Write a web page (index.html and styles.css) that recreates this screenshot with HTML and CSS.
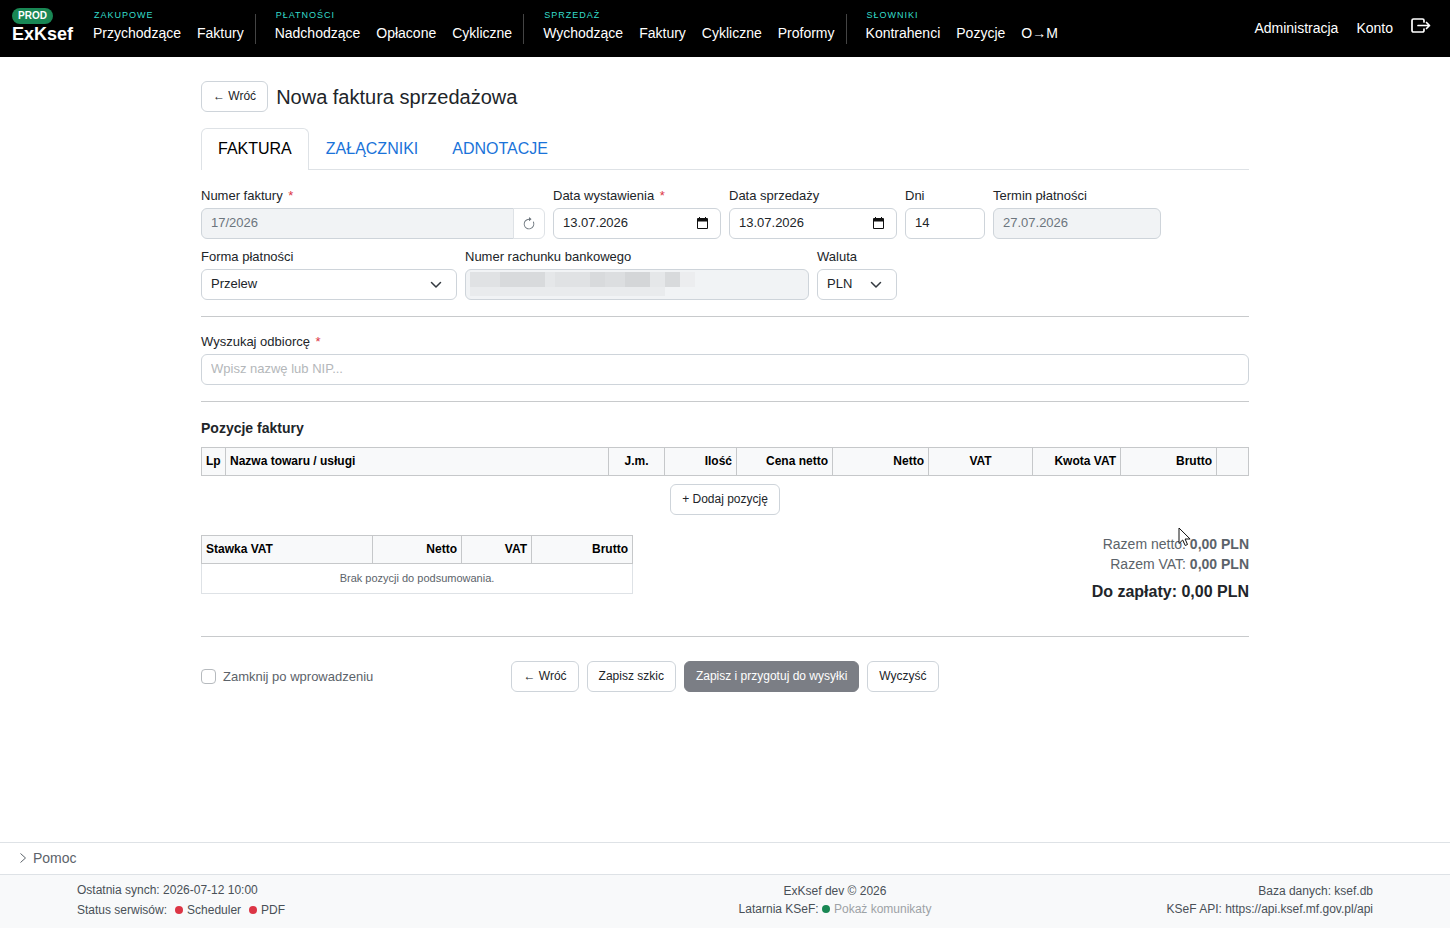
FILE: index.html
```html
<!DOCTYPE html>
<html lang="pl">
<head>
    <meta charset="UTF-8">
    <meta name="viewport" content="width=device-width, initial-scale=1.0">
    <title>Nowa faktura sprzedażowa</title>
    <link rel="stylesheet" href="styles.css">
</head>
<body>
    <header class="navbar">
        <a href="#" class="brand">
            <span class="badge">PROD</span>
            <span class="brand-name">ExKsef</span>
        </a>
        <nav class="menu">
            <div class="menu-group">
                <span class="menu-title">Zakupowe</span>
                <div class="menu-links">
                    <a href="#">Przychodzące</a>
                    <a href="#">Faktury</a>
                </div>
            </div>
            <div class="menu-group">
                <span class="menu-title">Płatności</span>
                <div class="menu-links">
                    <a href="#">Nadchodzące</a>
                    <a href="#">Opłacone</a>
                    <a href="#">Cykliczne</a>
                </div>
            </div>
            <div class="menu-group">
                <span class="menu-title">Sprzedaż</span>
                <div class="menu-links">
                    <a href="#">Wychodzące</a>
                    <a href="#">Faktury</a>
                    <a href="#">Cykliczne</a>
                    <a href="#">Proformy</a>
                </div>
            </div>
            <div class="menu-group">
                <span class="menu-title">Słowniki</span>
                <div class="menu-links">
                    <a href="#">Kontrahenci</a>
                    <a href="#">Pozycje</a>
                    <a href="#">O→M</a>
                </div>
            </div>
        </nav>
        <div class="user-menu">
            <a href="#">Administracja</a>
            <a href="#">Konto</a>
            <a href="#" class="logout" aria-label="Wyloguj">
                <svg width="20" height="16" viewBox="0 0 20 16" fill="none" stroke="currentColor" stroke-width="1.7" stroke-linecap="round" stroke-linejoin="round">
                    <path d="M13 4V2.500A1.500 1.500 0 0 0 11.500 1h-9A1.500 1.500 0 0 0 1 2.500v10A1.500 1.500 0 0 0 2.500 14h9a1.500 1.500 0 0 0 1.500-1.500V11"/>
                    <path d="M7 7.500h11.500M15.500 4.500l3 3-3 3"/>
                </svg>
            </a>
        </div>
    </header>

    <main class="container">
        <div class="page-title">
            <button type="button" class="btn">← Wróć</button>
            <h1>Nowa faktura sprzedażowa</h1>
        </div>

        <nav class="tabs">
            <a href="#" class="tab active">FAKTURA</a>
            <a href="#" class="tab">ZAŁĄCZNIKI</a>
            <a href="#" class="tab">ADNOTACJE</a>
        </nav>

        <form>
            <div class="grid">
                <div class="field span-4">
                    <label for="numer">Numer faktury <span class="required">*</span></label>
                    <div class="input-group">
                        <input type="text" id="numer" class="control" value="17/2026" disabled>
                        <button type="button" class="btn-icon" aria-label="Odśwież numer">
                            <svg width="14" height="14" viewBox="0 0 16 16" fill="currentColor">
                                <path fill-rule="evenodd" d="M8 3a5 5 0 1 0 4.546 2.914.5.5 0 0 1 .908-.417A6 6 0 1 1 8 2z"/>
                                <path d="M8 4.466V.534a.25.25 0 0 1 .41-.192l2.360 1.966c.12.1.12.284 0 .384L8.410 4.658A.25.25 0 0 1 8 4.466"/>
                            </svg>
                        </button>
                    </div>
                </div>
                <div class="field span-2">
                    <label for="data-wystawienia">Data wystawienia <span class="required">*</span></label>
                    <div class="date-box">
                        <input type="text" id="data-wystawienia" class="control" value="13.07.2026">
                        <svg class="calendar" width="11" height="12" viewBox="0 0 11 12"><path fill="#111" d="M2 0h1v1h5V0h1v1h1a1 1 0 0 1 1 1v9a1 1 0 0 1-1 1H1a1 1 0 0 1-1-1V2a1 1 0 0 1 1-1h1zM1 4.500V11h9V4.500z"/></svg>
                    </div>
                </div>
                <div class="field span-2">
                    <label for="data-sprzedazy">Data sprzedaży</label>
                    <div class="date-box">
                        <input type="text" id="data-sprzedazy" class="control" value="13.07.2026">
                        <svg class="calendar" width="11" height="12" viewBox="0 0 11 12"><path fill="#111" d="M2 0h1v1h5V0h1v1h1a1 1 0 0 1 1 1v9a1 1 0 0 1-1 1H1a1 1 0 0 1-1-1V2a1 1 0 0 1 1-1h1zM1 4.500V11h9V4.500z"/></svg>
                    </div>
                </div>
                <div class="field span-1">
                    <label for="dni">Dni</label>
                    <input type="text" id="dni" class="control" value="14">
                </div>
                <div class="field span-2">
                    <label for="termin">Termin płatności</label>
                    <input type="text" id="termin" class="control" value="27.07.2026" disabled>
                </div>

                <div class="field span-3 new-row">
                    <label for="forma">Forma płatności</label>
                    <select id="forma" class="control">
                        <option>Przelew</option>
                    </select>
                </div>
                <div class="field span-4">
                    <label for="rachunek">Numer rachunku bankowego</label>
                    <div class="masked">
                        <input type="text" id="rachunek" class="control" disabled>
                        <svg class="mask" width="225" height="24" viewBox="0 0 225 24" shape-rendering="crispEdges">
                            <path fill="#e9ebed" d="M0 15h195v9H0z"/>
                            <path fill="#e0e2e4" d="M0 0h30v15H0zM85 0h35v15H85z"/>
                            <path fill="#d8dadc" d="M30 0h45v15H30zM120 0h15v15h-15zM195 0h15v15h-15z"/>
                            <path fill="#e5e7e9" d="M75 0h10v15H75zM180 0h15v15h-15z"/>
                            <path fill="#dcdee0" d="M135 0h20v15h-20z"/>
                            <path fill="#d4d6d8" d="M155 0h25v15h-25z"/>
                            <path fill="#ecedef" d="M210 0h15v15h-15z"/>
                        </svg>
                    </div>
                </div>
                <div class="field span-1">
                    <label for="waluta">Waluta</label>
                    <select id="waluta" class="control">
                        <option>PLN</option>
                    </select>
                </div>
            </div>

            <hr>

            <div class="field">
                <label for="odbiorca">Wyszukaj odbiorcę <span class="required">*</span></label>
                <input type="text" id="odbiorca" class="control" placeholder="Wpisz nazwę lub NIP...">
            </div>

            <hr>

            <h2>Pozycje faktury</h2>
            <table class="items">
                <thead>
                    <tr>
                        <th class="col-lp">Lp</th>
                        <th>Nazwa towaru / usługi</th>
                        <th class="col-jm center">J.m.</th>
                        <th class="col-ilosc right">Ilość</th>
                        <th class="col-kwota right">Cena netto</th>
                        <th class="col-kwota right">Netto</th>
                        <th class="col-vat center">VAT</th>
                        <th class="col-kwota-vat right">Kwota VAT</th>
                        <th class="col-kwota right">Brutto</th>
                        <th class="col-akcje"></th>
                    </tr>
                </thead>
            </table>
            <div class="add-row">
                <button type="button" class="btn">+ Dodaj pozycję</button>
            </div>

            <div class="grid summary">
                <table class="span-5">
                    <thead>
                        <tr>
                            <th>Stawka VAT</th>
                            <th class="col-netto right">Netto</th>
                            <th class="col-podatek right">VAT</th>
                            <th class="col-brutto right">Brutto</th>
                        </tr>
                    </thead>
                    <tbody>
                        <tr>
                            <td colspan="4">Brak pozycji do podsumowania.</td>
                        </tr>
                    </tbody>
                </table>
                <div class="totals span-7">
                    <div>Razem netto: <strong>0,00 PLN</strong></div>
                    <div>Razem VAT: <strong>0,00 PLN</strong></div>
                    <div class="total">Do zapłaty: 0,00 PLN</div>
                    <svg class="cursor" width="14" height="20" viewBox="0 0 14 20"><path fill="#fff" stroke="#111" d="M1 1v15.500l3.700-3.500 2.500 5.500 2.300-1-2.400-5.500h5z"/></svg>
                </div>
            </div>

            <hr>

            <div class="actions">
                <label class="check"><input type="checkbox"> Zamknij po wprowadzeniu</label>
                <div class="buttons">
                    <button type="button" class="btn">← Wróć</button>
                    <button type="button" class="btn">Zapisz szkic</button>
                    <button type="button" class="btn btn-primary">Zapisz i przygotuj do wysyłki</button>
                    <button type="button" class="btn">Wyczyść</button>
                </div>
            </div>
        </form>
    </main>

    <button type="button" class="help">
        <svg width="8" height="12" viewBox="0 0 8 12" fill="none" stroke="currentColor"><path d="M1.500 1.500L6.500 6l-5 4.500"/></svg>
        Pomoc
    </button>

    <footer>
        <div class="footer-grid">
            <div class="footer-left">
                <div>Ostatnia synch: 2026-07-12 10:00</div>
                <div class="status">
                    <span>Status serwisów:</span>
                    <span><i class="dot red"></i>Scheduler</span>
                    <span><i class="dot red"></i>PDF</span>
                </div>
            </div>
            <div class="footer-center">
                <div>ExKsef dev © 2026</div>
                <div>Latarnia KSeF: <i class="dot green"></i><a href="#">Pokaż komunikaty</a></div>
            </div>
            <div class="footer-right">
                <div>Baza danych: ksef.db</div>
                <div>KSeF API: https://api.ksef.mf.gov.pl/api</div>
            </div>
        </div>
    </footer>
</body>
</html>
```
FILE: styles.css
```css
* {
    box-sizing: border-box;
}

body {
    margin: 0;
    min-height: 100vh;
    display: flex;
    flex-direction: column;
    font-family: "Liberation Sans", Arial, sans-serif;
    font-size: 14px;
    color: #212529;
    background-color: #fff;
}

a {
    text-decoration: none;
}

button, input, select {
    font-family: inherit;
}

/* Pasek nawigacji */
.navbar {
    display: flex;
    align-items: center;
    min-height: 57px;
    padding: 0 19px 0 12px;
    background-color: #000;
}

.navbar a {
    color: #fff;
}

.brand {
    display: flex;
    flex-direction: column;
    align-items: flex-start;
    margin-right: 20px;
    padding-bottom: 5px;
}

.badge {
    padding: 0 6px;
    border-radius: 8px;
    background-color: #198754;
    font-size: 10px;
    font-weight: bold;
    line-height: 16px;
}

.brand-name {
    font-size: 18px;
    font-weight: bold;
    line-height: 20px;
}

.menu {
    display: flex;
    padding-bottom: 6px;
}

.menu-group {
    position: relative;
    padding-right: 12px;
    margin-right: 19px;
}

.menu-group:not(:last-child)::after {
    content: "";
    position: absolute;
    top: 6px;
    right: 0;
    bottom: 0;
    width: 1px;
    background-color: #444;
}

.menu-title {
    display: block;
    padding-left: 1px;
    color: #35dccb;
    font-size: 9px;
    letter-spacing: 1px;
    line-height: 14px;
    text-transform: uppercase;
}

.menu-links {
    display: flex;
    gap: 16px;
    line-height: 22px;
}

.user-menu {
    display: flex;
    align-items: center;
    gap: 18px;
    margin-left: auto;
    padding-bottom: 2px;
}

.logout {
    padding-bottom: 4px;
}

.logout svg {
    display: block;
}

/* Formularz */
.container {
    flex: 1;
    width: 100%;
    max-width: 1080px;
    margin: 0 auto;
    padding: 24px 16px;
}

.page-title {
    display: flex;
    align-items: center;
    gap: 8px;
    margin-bottom: 16px;
}

h1 {
    margin: 0;
    font-size: 20px;
    font-weight: normal;
    line-height: 24px;
}

h2 {
    margin: 0 0 10px;
    font-size: 14px;
    line-height: 18px;
}

.btn {
    height: 31px;
    padding: 0 11px 2px;
    border: 1px solid #ced4da;
    border-radius: 6px;
    background-color: #fff;
    color: #212529;
    font-size: 12px;
}

.btn-primary {
    border-color: #7b7e85;
    background-color: #7b7e85;
    color: #fff;
}

.tabs {
    display: flex;
    margin-bottom: 16px;
    border-bottom: 1px solid #dee2e6;
}

.tab {
    padding: 8px 16px;
    border: 1px solid transparent;
    border-bottom: 0;
    border-radius: 6px 6px 0 0;
    color: #1a73d9;
    font-size: 16px;
    line-height: 24px;
}

.tab.active {
    margin-bottom: -1px;
    padding-bottom: 9px;
    border-color: #dee2e6;
    background-color: #fff;
    color: #000;
}

.grid {
    display: grid;
    grid-template-columns: repeat(12, 1fr);
    gap: 8px;
}

.span-1 { grid-column: span 1; }
.span-2 { grid-column: span 2; }
.span-3 { grid-column: span 3; }
.span-4 { grid-column: span 4; }
.span-5 { grid-column: span 5; }
.span-7 { grid-column: span 7; }
.new-row { grid-column: 1 / span 3; }

.field label {
    display: block;
    margin-bottom: 2px;
    font-size: 13px;
    line-height: 20px;
}

.required {
    margin-left: 2px;
    color: #dc3545;
}

.control {
    display: block;
    width: 100%;
    height: 31px;
    padding: 0 9px 2px;
    border: 1px solid #ced4da;
    border-radius: 6px;
    background-color: #fff;
    color: #212529;
    font-size: 13px;
}

.control:disabled {
    background-color: #f1f3f5;
    color: #6c757d;
}

.control::placeholder {
    color: #b4b7ba;
}

select.control {
    appearance: none;
    background-image: url("data:image/svg+xml,%3Csvg xmlns='http://www.w3.org/2000/svg' viewBox='0 0 12 12'%3E%3Cpath fill='none' stroke='%23343a40' stroke-width='1.5' stroke-linecap='round' stroke-linejoin='round' d='M1.500 3.500l4.500 4.500 4.500-4.500'/%3E%3C/svg%3E");
    background-repeat: no-repeat;
    background-position: right 14px center;
    background-size: 12px 12px;
}

.input-group {
    display: flex;
}

.input-group .control {
    flex: 1;
    border-radius: 6px 0 0 6px;
}

.btn-icon {
    display: flex;
    align-items: center;
    justify-content: center;
    width: 32px;
    margin-left: -1px;
    padding: 0;
    border: 1px solid #dee2e6;
    border-radius: 0 6px 6px 0;
    background-color: #fff;
    color: #6c757d;
}

.date-box, .masked {
    position: relative;
}

.calendar {
    position: absolute;
    top: 9px;
    right: 13px;
}

.mask {
    position: absolute;
    top: 3px;
    left: 5px;
}

hr {
    margin: 16px 0 15px;
    border: 0;
    border-top: 1px solid #c8cacc;
}

hr + h2 {
    margin-top: 17px;
}

/* Tabele */
table {
    width: 100%;
    border-collapse: collapse;
    table-layout: fixed;
}

th {
    height: 28px;
    padding: 0 4px 2px;
    border: 1px solid #c6c8ca;
    background-color: #f8f9fa;
    color: #000;
    font-size: 12px;
    text-align: left;
}

td {
    height: 30px;
    padding: 0 4px 2px;
    border: 1px solid #dee2e6;
    color: #5c636a;
    font-size: 11px;
    text-align: center;
}

.center { text-align: center; }
.right { text-align: right; }

.col-lp { width: 24px; }
.col-jm { width: 56px; }
.col-ilosc { width: 72px; }
.col-kwota { width: 96px; }
.col-vat { width: 104px; }
.col-kwota-vat { width: 88px; }
.col-akcje { width: 32px; }
.col-netto { width: 89px; }
.col-podatek { width: 70px; }
.col-brutto { width: 101px; }

.add-row {
    display: flex;
    justify-content: center;
    margin: 8px 0 20px;
}

.summary {
    align-items: start;
    margin-bottom: 32px;
}

.totals {
    position: relative;
    margin-top: -1px;
    color: #5c636a;
    line-height: 20px;
    text-align: right;
}

.total {
    margin-top: 6px;
    color: #212529;
    font-size: 16px;
    font-weight: bold;
    line-height: 24px;
}

.cursor {
    position: absolute;
    top: -7px;
    right: 57px;
}

.actions {
    display: grid;
    grid-template-columns: 1fr auto 1fr;
    align-items: center;
    margin-top: 24px;
}

.check {
    display: flex;
    align-items: center;
    gap: 7px;
    color: #5c636a;
    font-size: 13px;
}

.check input {
    appearance: none;
    width: 15px;
    height: 15px;
    margin: 0;
    border: 1px solid #b6babe;
    border-radius: 4px;
}

.buttons {
    display: flex;
    gap: 8px;
}

/* Stopka */
.help {
    display: flex;
    align-items: center;
    gap: 6px;
    height: 32px;
    padding: 0 19px 2px;
    border: 0;
    border-top: 1px solid #dee2e6;
    background-color: #fff;
    color: #5c636a;
    font-size: 14px;
}

footer {
    border-top: 1px solid #dee2e6;
    background-color: #f8f9fa;
    color: #495057;
    font-size: 12px;
}

.footer-grid {
    display: grid;
    grid-template-columns: 5fr 4fr 3fr;
    align-items: center;
    max-width: 1320px;
    min-height: 53px;
    margin: 0 auto;
    padding-bottom: 3px;
}

.footer-grid > div {
    padding: 0 12px;
    line-height: 18px;
}

.footer-grid .footer-left {
    line-height: 20px;
}

.status {
    display: flex;
    gap: 8px;
}

.dot {
    display: inline-block;
    width: 8px;
    height: 8px;
    margin-right: 4px;
    border-radius: 50%;
}

.red { background-color: #dc3545; }
.green { background-color: #198754; }

.footer-center {
    text-align: center;
}

.footer-center a {
    color: #9da2a6;
}

.footer-right {
    text-align: right;
}
```
